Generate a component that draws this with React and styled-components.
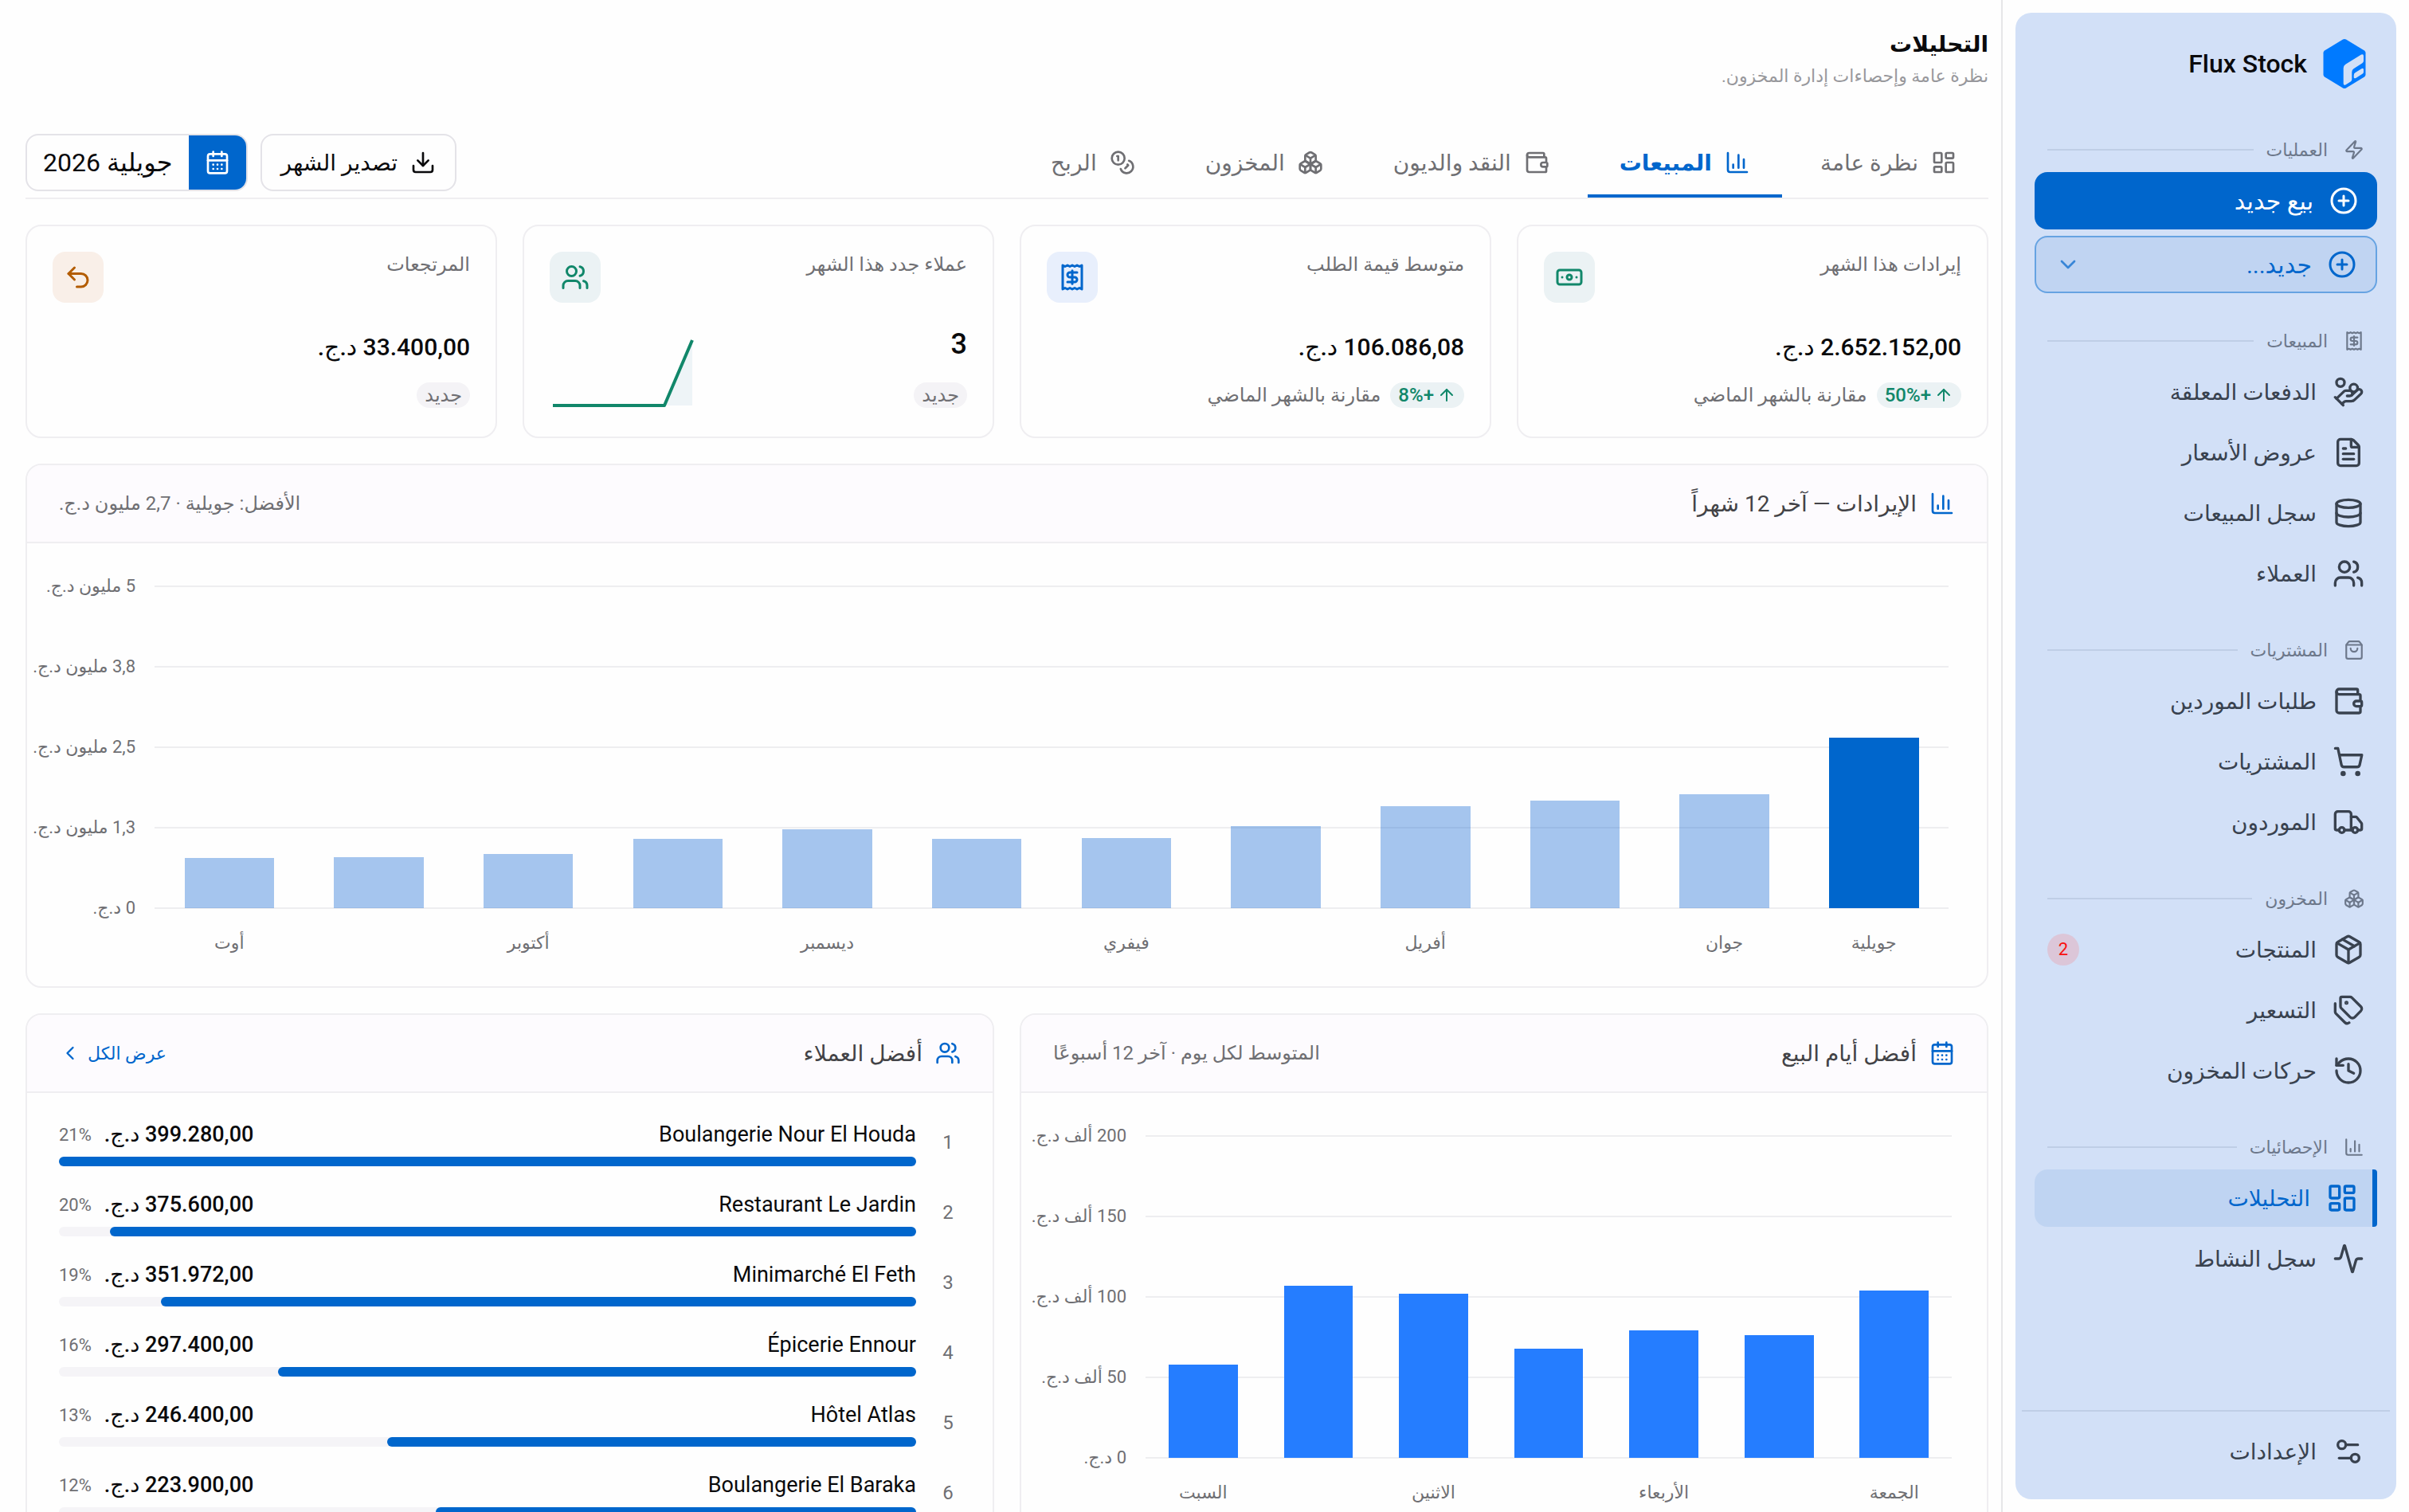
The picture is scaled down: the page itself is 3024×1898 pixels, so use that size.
import styled, { createGlobalStyle, css } from 'styled-components'
import {
  Activity,
  ArrowUp,
  Banknote,
  Boxes,
  CalendarDays,
  ChartColumn,
  ChevronDown,
  ChevronLeft,
  CirclePlus,
  Coins,
  Database,
  Download,
  FileText,
  HandCoins,
  History,
  LayoutDashboard,
  Package,
  Receipt,
  Settings2,
  ShoppingBag,
  ShoppingCart,
  Tags,
  Truck,
  Undo2,
  Users,
  Wallet,
  Zap,
} from 'lucide-react'

const GlobalStyle = createGlobalStyle`
  :root {
    --primary: #0066cc;
    --text: #0a0a0c;
    --text-title: #434347;
    --text-muted: #6f6f73;
    --border: #efeef1;
    --surface: #fefefe;
    --surface-header: #fdfbfe;
    --sidebar: #d2e0f7;
    --sidebar-text: #39424f;
    --sidebar-line: #bfcee6;
    --green: #11876a;
  }

  * {
    box-sizing: border-box;
  }

  body {
    margin: 0;
    background: var(--surface);
    color: var(--text);
    font-family: Roboto, 'DejaVu Sans', sans-serif;
    font-size: 24px;
  }

  button {
    font: inherit;
    color: inherit;
    cursor: pointer;
  }

  a {
    color: inherit;
    text-decoration: none;
  }

  svg {
    flex: none;
  }
`

const Layout = styled.div`
  display: flex;
  height: 100vh;
  overflow: hidden;
`

/* Sidebar */

const Aside = styled.aside`
  flex: none;
  width: 512px;
  padding: 16px;
  border-left: 2px solid #e6e6e8;
`

const SidebarPanel = styled.div`
  display: flex;
  flex-direction: column;
  height: 100%;
  border-radius: 20px;
  background: var(--sidebar);
`

const Brand = styled.div`
  display: flex;
  align-items: center;
  gap: 20px;
  height: 128px;
  padding: 0 38px;
  font-size: 32px;
  font-weight: 500;
`

const Nav = styled.nav`
  display: flex;
  flex: 1;
  flex-direction: column;
  gap: 36px;
  min-height: 0;
  padding: 20px 24px 0;
`

const SectionTitle = styled.h2`
  display: flex;
  align-items: center;
  gap: 16px;
  height: 48px;
  margin: 0 0 4px;
  padding: 0 16px;
  color: #6d788b;
  font-size: 22px;
  font-weight: 400;

  svg {
    margin-left: 4px;
  }

  &::after {
    content: '';
    flex: 1;
    height: 2px;
    background: var(--sidebar-line);
  }
`

const NavList = styled.ul`
  display: grid;
  gap: ${({ $gap }) => $gap || 4}px;
  margin: 0;
  padding: 0;
  list-style: none;
`

const itemStyle = css`
  display: flex;
  align-items: center;
  gap: 20px;
  width: 100%;
  height: 72px;
  padding: 0 16px;
  border: none;
  border-radius: 16px;
  font-size: 28px;
`

const NavLink = styled.a`
  ${itemStyle}
  color: var(--sidebar-text);

  ${({ $active }) =>
    $active &&
    css`
      padding-right: 18px;
      border-right: 6px solid var(--primary);
      border-radius: 16px 4px 4px 16px;
      background: #bfd4f2;
      color: var(--primary);
    `}
`

const NavButton = styled.button`
  ${itemStyle}
  padding: 0 24px;
  background: var(--primary);
  color: #ffffff;
  font-size: 30px;

  ${({ $outlined }) =>
    $outlined &&
    css`
      border: 2px solid #66a3e2;
      background: #c0d4f2;
      color: var(--primary);
    `}

  svg:nth-of-type(2) {
    margin-right: auto;
  }
`

const NavBadge = styled.span`
  width: 40px;
  height: 40px;
  margin-right: auto;
  border-radius: 50%;
  background: #dcc6d8;
  color: #f8100f;
  font-size: 22px;
  line-height: 40px;
  text-align: center;
`

const SidebarFooter = styled.div`
  margin: 0 8px;
  padding: 14px 16px 24px;
  border-top: 2px solid var(--sidebar-line);
`

/* Page */

const Main = styled.main`
  flex: 1;
  min-width: 0;
  overflow-y: auto;
  padding: 32px 16px 32px 32px;
  scrollbar-width: none;
`

const PageTitle = styled.h1`
  margin: 0;
  font-size: 28px;
  font-weight: 700;
  line-height: 48px;
`

const PageSubtitle = styled.p`
  margin: 0 0 48px;
  color: #98989c;
  font-size: 22px;
  line-height: 32px;
`

const Toolbar = styled.div`
  display: flex;
  align-items: center;
  justify-content: space-between;
  margin-bottom: 32px;
  border-bottom: 2px solid var(--border);
`

const TabList = styled.div`
  display: flex;
  gap: 8px;
`

const Tab = styled.button`
  display: flex;
  align-items: center;
  gap: 16px;
  height: 88px;
  padding: 4px 40px 0;
  border: none;
  border-bottom: 4px solid ${({ $active }) => ($active ? 'var(--primary)' : 'transparent')};
  background: none;
  color: ${({ $active }) => ($active ? 'var(--primary)' : 'var(--text-muted)')};
  font-size: 28px;
  font-weight: ${({ $active }) => ($active ? 700 : 400)};
`

const Actions = styled.div`
  display: flex;
  gap: 16px;
`

const ActionButton = styled.button`
  display: flex;
  align-items: center;
  gap: 16px;
  height: 72px;
  padding: 0 24px;
  overflow: hidden;
  border: 2px solid #e4e3e8;
  border-radius: 16px;
  background: var(--surface);
  color: var(--text);
  font-size: 28px;
`

const MonthButton = styled(ActionButton)`
  gap: 0;
  padding: 0;
  font-size: 32px;
`

const MonthIcon = styled.span`
  display: flex;
  align-items: center;
  justify-content: center;
  width: 72px;
  height: 100%;
  background: var(--primary);
  color: #ffffff;
`

const MonthValue = styled.span`
  padding: 0 20px;
`

const Stack = styled.div`
  display: grid;
  gap: 32px;
`

const StatGrid = styled.div`
  display: grid;
  grid-template-columns: repeat(4, minmax(0, 1fr));
  gap: 32px;
`

const StatCard = styled.section`
  display: flex;
  flex-direction: column;
  justify-content: space-between;
  height: 268px;
  padding: 32px;
  border: 2px solid var(--border);
  border-radius: 20px;
`

const StatTop = styled.div`
  display: flex;
  justify-content: space-between;
`

const StatLabel = styled.h3`
  margin: 0;
  color: var(--text-muted);
  font-size: 24px;
  font-weight: 400;
  line-height: 32px;
`

const tones = {
  green: ['#ebf2f4', 'var(--green)'],
  blue: ['#e8effc', 'var(--primary)'],
  orange: ['#f9efe8', '#b35c00'],
}

const StatIcon = styled.span`
  display: flex;
  align-items: center;
  justify-content: center;
  width: 64px;
  height: 64px;
  border-radius: 16px;
  background: ${({ $tone }) => tones[$tone][0]};
  color: ${({ $tone }) => tones[$tone][1]};
`

const StatBottom = styled.div`
  display: flex;
  align-items: flex-end;
  justify-content: space-between;
`

const StatValue = styled.div`
  margin-bottom: 16px;
  font-size: ${({ $large }) => ($large ? 36 : 30)}px;
  font-weight: 500;
  line-height: ${({ $large }) => ($large ? 56 : 48)}px;
`

const StatTrend = styled.div`
  display: flex;
  align-items: center;
  gap: 12px;
  height: 40px;
  color: var(--text-muted);
  font-size: 24px;
`

const Pill = styled.span`
  display: inline-flex;
  align-items: center;
  gap: 4px;
  height: 32px;
  padding: 0 10px;
  border-radius: 16px;
  background: ${({ $up }) => ($up ? '#ebf2f4' : '#f4f3f6')};
  color: ${({ $up }) => ($up ? 'var(--green)' : 'var(--text-muted)')};
  font-weight: ${({ $up }) => ($up ? 500 : 400)};
`

const Panel = styled.section`
  border: 2px solid var(--border);
  border-radius: 20px;
  overflow: hidden;
`

const PanelHeader = styled.header`
  display: flex;
  align-items: center;
  gap: 16px;
  height: 98px;
  padding: 0 40px;
  border-bottom: 2px solid var(--border);
  background: var(--surface-header);

  > svg {
    color: var(--primary);
  }
`

const PanelTitle = styled.h2`
  margin: 0;
  color: var(--text-title);
  font-size: 28px;
  font-weight: 400;
`

const PanelNote = styled.span`
  margin-right: auto;
  color: var(--text-muted);
  font-size: 24px;
`

const PanelLink = styled.a`
  display: flex;
  align-items: center;
  gap: 8px;
  margin-right: auto;
  color: var(--primary);
  font-size: 22px;
`

const TwoColumns = styled.div`
  display: grid;
  grid-template-columns: repeat(2, minmax(0, 1fr));
  align-items: start;
  gap: 32px;
`

/* Bar chart */

const ChartBody = styled.div`
  display: grid;
  grid-template-columns: ${({ $axis }) => $axis}px minmax(0, 1fr);
  grid-template-rows: 404px auto;
  padding: 54px ${({ $end }) => $end}px 38px 0;
  direction: ltr;
`

const AxisY = styled.div`
  display: flex;
  flex-direction: column;
  justify-content: space-between;
  margin: -16px 24px -16px 0;
  color: var(--text-muted);
  font-size: 22px;
  line-height: 32px;
  direction: rtl;
  white-space: nowrap;
`

const Plot = styled.div`
  display: grid;
`

const GridLines = styled.div`
  display: flex;
  grid-area: 1 / 1;
  flex-direction: column;
  justify-content: space-between;
  margin: -1px 0;

  i {
    height: 2px;
    background: #eeeef0;
  }
`

const Bars = styled.div`
  display: flex;
  grid-area: 1 / 1;
  align-items: flex-end;
  z-index: 1;
`

const BarSlot = styled.div`
  display: flex;
  flex: 1;
  align-items: flex-end;
  justify-content: center;
  height: 100%;
`

const Bar = styled.div`
  width: 60%;
  background: ${({ $color }) => $color};
`

const AxisX = styled.div`
  display: flex;
  grid-column: 2;
  padding-top: 28px;
  color: var(--text-muted);
  font-size: 22px;
  line-height: 32px;

  span {
    flex: 1;
    min-width: 0;
    min-height: 32px;
    text-align: center;
    white-space: nowrap;
  }
`

/* Customers */

const CustomerList = styled.ol`
  display: grid;
  gap: 28px;
  margin: 0;
  padding: 32px 40px;
  list-style: none;
`

const Customer = styled.li`
  display: flex;
  align-items: center;
  gap: 24px;
`

const Rank = styled.span`
  width: 32px;
  color: var(--text-muted);
  font-size: 24px;
  text-align: center;
`

const CustomerInfo = styled.div`
  flex: 1;
`

const CustomerLine = styled.div`
  display: flex;
  align-items: center;
  gap: 16px;
  height: 40px;
  margin-bottom: 8px;
  font-size: 27px;
`

const CustomerName = styled.span`
  margin-left: auto;
`

const Amount = styled.span`
  font-weight: 500;
`

const Share = styled.span`
  color: var(--text-muted);
  font-size: 22px;
`

const Track = styled.div`
  height: 12px;
  border-radius: 6px;
  background: #f5f4f7;
`

const Fill = styled.div`
  height: 100%;
  border-radius: 6px;
  background: var(--primary);
`

const sections = [
  {
    title: 'المبيعات',
    icon: Receipt,
    items: [
      { label: 'الدفعات المعلقة', icon: HandCoins },
      { label: 'عروض الأسعار', icon: FileText },
      { label: 'سجل المبيعات', icon: Database },
      { label: 'العملاء', icon: Users },
    ],
  },
  {
    title: 'المشتريات',
    icon: ShoppingBag,
    items: [
      { label: 'طلبات الموردين', icon: Wallet },
      { label: 'المشتريات', icon: ShoppingCart },
      { label: 'الموردون', icon: Truck },
    ],
  },
  {
    title: 'المخزون',
    icon: Boxes,
    items: [
      { label: 'المنتجات', icon: Package, badge: 2 },
      { label: 'التسعير', icon: Tags },
      { label: 'حركات المخزون', icon: History },
    ],
  },
  {
    title: 'الإحصائيات',
    icon: ChartColumn,
    items: [
      { label: 'التحليلات', icon: LayoutDashboard, active: true },
      { label: 'سجل النشاط', icon: Activity },
    ],
  },
]

const tabs = [
  { label: 'نظرة عامة', icon: LayoutDashboard },
  { label: 'المبيعات', icon: ChartColumn, active: true },
  { label: 'النقد والديون', icon: Wallet },
  { label: 'المخزون', icon: Boxes },
  { label: 'الربح', icon: Coins },
]

const stats = [
  { label: 'إيرادات هذا الشهر', value: '2.652.152,00 د.ج.', icon: Banknote, tone: 'green', change: '+50%' },
  { label: 'متوسط قيمة الطلب', value: '106.086,08 د.ج.', icon: Receipt, tone: 'blue', change: '+8%' },
  { label: 'عملاء جدد هذا الشهر', value: '3', icon: Users, tone: 'green', spark: [0, 0, 0, 0, 0, 3] },
  { label: 'المرتجعات', value: '33.400,00 د.ج.', icon: Undo2, tone: 'orange' },
]

const revenue = [
  { label: 'أوت', value: 0.78 },
  { value: 0.787 },
  { label: 'أكتوبر', value: 0.842 },
  { value: 1.078 },
  { label: 'ديسمبر', value: 1.225 },
  { value: 1.083 },
  { label: 'فيفري', value: 1.09 },
  { value: 1.28 },
  { label: 'أفريل', value: 1.587 },
  { value: 1.674 },
  { label: 'جوان', value: 1.766 },
  { label: 'جويلية', value: 2.652, highlight: true },
]

const weekdays = [
  { label: 'السبت', value: 58 },
  { value: 107 },
  { label: 'الاثنين', value: 102 },
  { value: 68 },
  { label: 'الأربعاء', value: 79 },
  { value: 76 },
  { label: 'الجمعة', value: 104 },
]

const customers = [
  { name: 'Boulangerie Nour El Houda', total: 399280, amount: '399.280,00', share: '21%' },
  { name: 'Restaurant Le Jardin', total: 375600, amount: '375.600,00', share: '20%' },
  { name: 'Minimarché El Feth', total: 351972, amount: '351.972,00', share: '19%' },
  { name: 'Épicerie Ennour', total: 297400, amount: '297.400,00', share: '16%' },
  { name: 'Hôtel Atlas', total: 246400, amount: '246.400,00', share: '13%' },
  { name: 'Boulangerie El Baraka', total: 223900, amount: '223.900,00', share: '12%' },
]

const Logo = () => (
  <svg width="54" height="62" viewBox="0 0 53 62" aria-hidden="true">
    <path
      fill="#007aff"
      d="M24.5 .6q2-1.2 4 0L51.5 14.5Q53 15.500 53 17.2V44.8Q53 46.5 51.5 47.5L28.5 61.4q-2 1.2-4 0L1.5 47.5Q0 46.5 0 44.8V17.2Q0 15.5 1.5 14.5Z"
    />
    <path
      fill="#d2e0f7"
      d="M25.2 36.5q0-3.2 2.6-4.8L47.6 19.6q2.9-1.4 2.9 1.6v6.2q0 1.800-1.6 2.8L38 37.2q-2.2 1.4-2.2 4.2v9.4q0 1.8-1.6 2.8l-6 3.7q-3 1.5-3-1.5Z"
    />
    <path
      fill="#d2e0f7"
      d="M38.2 45.5q0-2.2 1.7-3.2l8-5q2.6-1.3 2.6 1.1v2.8q0 1.6-1.5 2.6l-7.8 4.9q-3 1.5-3-.8Z"
    />
  </svg>
)

const Sparkline = ({ values }) => {
  const max = Math.max(...values)
  const points = values.map((v, i) => `${4 + i * 35},${89 - (v / max) * 82}`)

  return (
    <svg width="184" height="96" viewBox="0 0 184 96" aria-hidden="true">
      <polygon points={`4,89 ${points.join(' ')} 179,89`} fill="#eef4f7" />
      <polyline points={points.join(' ')} fill="none" stroke="#11876a" strokeWidth="4" strokeLinejoin="round" />
    </svg>
  )
}

const BarChart = ({ data, max, ticks, axis, end, color, highlight }) => (
  <ChartBody $axis={axis} $end={end}>
    <AxisY>
      {ticks.map((tick) => (
        <span key={tick}>{tick}</span>
      ))}
    </AxisY>
    <Plot>
      <GridLines>
        {ticks.map((tick) => (
          <i key={tick} />
        ))}
      </GridLines>
      <Bars>
        {data.map((item, i) => (
          <BarSlot key={i}>
            <Bar $color={item.highlight ? highlight : color} style={{ height: `${(item.value / max) * 100}%` }} />
          </BarSlot>
        ))}
      </Bars>
    </Plot>
    <AxisX>
      {data.map((item, i) => (
        <span key={i}>{item.label}</span>
      ))}
    </AxisX>
  </ChartBody>
)

const Sidebar = () => (
  <Aside>
    <SidebarPanel>
      <Brand>
        <Logo />
        <span>Flux Stock</span>
      </Brand>

      <Nav>
        <div>
          <SectionTitle>
            <Zap size={26} />
            العمليات
          </SectionTitle>
          <NavList $gap={8}>
            <li>
              <NavButton type="button">
                <CirclePlus size={36} />
                بيع جديد
              </NavButton>
            </li>
            <li>
              <NavButton type="button" $outlined>
                <CirclePlus size={36} />
                جديد...
                <ChevronDown size={32} opacity={0.7} />
              </NavButton>
            </li>
          </NavList>
        </div>

        {sections.map(({ title, icon: SectionIcon, items }) => (
          <div key={title}>
            <SectionTitle>
              <SectionIcon size={26} />
              {title}
            </SectionTitle>
            <NavList>
              {items.map(({ label, icon: Icon, badge, active }) => (
                <li key={label}>
                  <NavLink href="#" $active={active}>
                    <Icon size={40} />
                    {label}
                    {badge && <NavBadge>{badge}</NavBadge>}
                  </NavLink>
                </li>
              ))}
            </NavList>
          </div>
        ))}
      </Nav>

      <SidebarFooter>
        <NavLink href="#">
          <Settings2 size={40} />
          الإعدادات
        </NavLink>
      </SidebarFooter>
    </SidebarPanel>
  </Aside>
)

const App = () => (
  <>
    <GlobalStyle />
    <Layout dir="rtl" lang="ar">
      <Sidebar />

      <Main>
        <PageTitle>التحليلات</PageTitle>
        <PageSubtitle>نظرة عامة وإحصاءات إدارة المخزون.</PageSubtitle>

        <Toolbar>
          <TabList role="tablist">
            {tabs.map(({ label, icon: Icon, active }) => (
              <Tab key={label} type="button" role="tab" aria-selected={!!active} $active={active}>
                <Icon size={32} />
                {label}
              </Tab>
            ))}
          </TabList>
          <Actions>
            <ActionButton type="button">
              <Download size={32} />
              تصدير الشهر
            </ActionButton>
            <MonthButton type="button">
              <MonthIcon>
                <CalendarDays size={32} />
              </MonthIcon>
              <MonthValue>جويلية 2026</MonthValue>
            </MonthButton>
          </Actions>
        </Toolbar>

        <Stack>
          <StatGrid>
            {stats.map(({ label, value, icon: Icon, tone, change, spark }) => (
              <StatCard key={label}>
                <StatTop>
                  <StatLabel>{label}</StatLabel>
                  <StatIcon $tone={tone}>
                    <Icon size={36} />
                  </StatIcon>
                </StatTop>
                <StatBottom>
                  <div>
                    <StatValue $large={!!spark}>{value}</StatValue>
                    <StatTrend>
                      {change ? (
                        <>
                          <Pill $up>
                            <ArrowUp size={24} />
                            {change}
                          </Pill>
                          مقارنة بالشهر الماضي
                        </>
                      ) : (
                        <Pill>جديد</Pill>
                      )}
                    </StatTrend>
                  </div>
                  {spark && <Sparkline values={spark} />}
                </StatBottom>
              </StatCard>
            ))}
          </StatGrid>

          <Panel>
            <PanelHeader>
              <ChartColumn size={32} />
              <PanelTitle>الإيرادات — آخر 12 شهراً</PanelTitle>
              <PanelNote>الأفضل: جويلية · 2,7 مليون د.ج.</PanelNote>
            </PanelHeader>
            <BarChart
              data={revenue}
              max={5}
              ticks={['5 مليون د.ج.', '3,8 مليون د.ج.', '2,5 مليون د.ج.', '1,3 مليون د.ج.', '0 د.ج.']}
              axis={160}
              end={48}
              color="rgba(0, 92, 208, 0.35)"
              highlight="var(--primary)"
            />
          </Panel>

          <TwoColumns>
            <Panel>
              <PanelHeader>
                <CalendarDays size={32} />
                <PanelTitle>أفضل أيام البيع</PanelTitle>
                <PanelNote>المتوسط لكل يوم · آخر 12 أسبوعًا</PanelNote>
              </PanelHeader>
              <BarChart
                data={weekdays}
                max={200}
                ticks={['200 ألف د.ج.', '150 ألف د.ج.', '100 ألف د.ج.', '50 ألف د.ج.', '0 د.ج.']}
                axis={156}
                end={44}
                color="#257dff"
              />
            </Panel>

            <Panel>
              <PanelHeader>
                <Users size={32} />
                <PanelTitle>أفضل العملاء</PanelTitle>
                <PanelLink href="#">
                  عرض الكل
                  <ChevronLeft size={28} />
                </PanelLink>
              </PanelHeader>
              <CustomerList>
                {customers.map(({ name, total, amount, share }, i) => (
                  <Customer key={name}>
                    <Rank>{i + 1}</Rank>
                    <CustomerInfo>
                      <CustomerLine>
                        <CustomerName>{name}</CustomerName>
                        <Amount>{amount} د.ج.</Amount>
                        <Share>{share}</Share>
                      </CustomerLine>
                      <Track>
                        <Fill style={{ width: `${(total / customers[0].total) * 100}%` }} />
                      </Track>
                    </CustomerInfo>
                  </Customer>
                ))}
              </CustomerList>
            </Panel>
          </TwoColumns>
        </Stack>
      </Main>
    </Layout>
  </>
)

export default App
